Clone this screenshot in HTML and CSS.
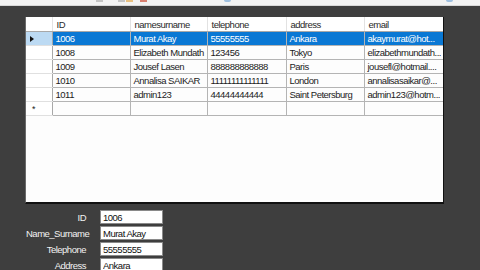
FILE: index.html
```html
<!DOCTYPE html>
<html lang="en">
<head>
    <meta charset="UTF-8">
    <title>Users</title>
    <link rel="stylesheet" href="styles.css">
</head>
<body>
    <div class="toolbar">
        <span class="tb-icon" style="left: 96px"></span>
        <span class="tb-icon" style="left: 118px"></span>
        <span class="tb-icon orange" style="left: 126px"></span>
        <span class="tb-icon red" style="left: 140px"></span>
        <span class="tb-icon blue" style="left: 224px"></span>
        <span class="tb-icon blue" style="left: 446px"></span>
    </div>
    <div class="main">
        <div class="grid">
            <table class="data">
                <colgroup>
                    <col class="c-rh">
                    <col class="c-id">
                    <col class="c-name">
                    <col class="c-tel">
                    <col class="c-addr">
                    <col class="c-mail">
                </colgroup>
                <thead>
                    <tr>
                        <th class="rh"></th>
                        <th>ID</th>
                        <th>namesurname</th>
                        <th>telephone</th>
                        <th>address</th>
                        <th>email</th>
                    </tr>
                </thead>
                <tbody>
                    <tr class="selected">
                        <td class="rh"><span class="arrow"></span></td>
                        <td>1006</td>
                        <td>Murat Akay</td>
                        <td>55555555</td>
                        <td>Ankara</td>
                        <td>akaymurat@hot...</td>
                    </tr>
                    <tr>
                        <td class="rh"></td>
                        <td>1008</td>
                        <td>Elizabeth Mundath</td>
                        <td>123456</td>
                        <td>Tokyo</td>
                        <td>elizabethmundath...</td>
                    </tr>
                    <tr>
                        <td class="rh"></td>
                        <td>1009</td>
                        <td>Jousef Lasen</td>
                        <td>888888888888</td>
                        <td>Paris</td>
                        <td>jousefl@hotmail....</td>
                    </tr>
                    <tr>
                        <td class="rh"></td>
                        <td>1010</td>
                        <td>Annalisa SAIKAR</td>
                        <td>11111111111111</td>
                        <td>London</td>
                        <td>annalisasaikar@...</td>
                    </tr>
                    <tr>
                        <td class="rh"></td>
                        <td>1011</td>
                        <td>admin123</td>
                        <td>44444444444</td>
                        <td>Saint Petersburg</td>
                        <td>admin123@hotm...</td>
                    </tr>
                    <tr class="new-row">
                        <td class="rh"><span class="star">*</span></td>
                        <td></td>
                        <td></td>
                        <td></td>
                        <td></td>
                        <td></td>
                    </tr>
                </tbody>
            </table>
        </div>

        <div class="details">
            <label for="f-id">ID</label>
            <input type="text" id="f-id" value="1006">
            <label for="f-name">Name_Surname</label>
            <input type="text" id="f-name" value="Murat Akay">
            <label for="f-tel">Telephone</label>
            <input type="text" id="f-tel" value="55555555">
            <label for="f-addr">Address</label>
            <input type="text" id="f-addr" value="Ankara">
        </div>
    </div>
</body>
</html>
```

FILE: styles.css
```css
body {
    margin: 0;
    padding: 0;
    background-color: #3e3e3e;
    font-family: 'Liberation Sans', Arial, sans-serif;
    font-size: 9.5px;
    letter-spacing: -0.5px;
    overflow: hidden;
    height: 270px;
}

.toolbar {
    position: relative;
    height: 5px;
    background-color: #f2f2f2;
    border-bottom: 1px solid #d8d8d8;
}

.tb-icon {
    position: absolute;
    top: 0;
    width: 7px;
    height: 2px;
    background-color: #c4c4c4;
}

.tb-icon.orange {
    background-color: #e8c080;
}

.tb-icon.red {
    background-color: #d88070;
}

.tb-icon.blue {
    background-color: #9fc0e0;
    border-radius: 0 0 4px 4px;
}

.main {
    padding: 11px 0 0 26px;
}

.grid {
    width: 417px;
    height: 185px;
    background-color: #fdfdfd;
    border-left: 1px solid #6a6a6a;
    border-right: 1px solid #111;
    border-bottom: 2px solid #111;
    margin-left: -1px;
    overflow: hidden;
}

.data {
    border-collapse: collapse;
    table-layout: fixed;
    width: 417px;
    color: #1c1c1c;
}

.c-rh { width: 26px; }
.c-id { width: 78px; }
.c-name { width: 77px; }
.c-tel { width: 79px; }
.c-addr { width: 78px; }
.c-mail { width: 79px; }

.data th,
.data td {
    height: 13px;
    padding: 0 0 0 3px;
    border: 1px solid #b4b4b4;
    white-space: nowrap;
    overflow: hidden;
    text-align: left;
    font-weight: normal;
    line-height: 13px;
}

.data th {
    height: 14px;
    background-color: #ffffff;
    color: #2a2a2a;
    padding-left: 4px;
    border-top: none;
    border-color: #e2e2e2;
    border-bottom-color: #a8a8a8;
}

.data th:first-child,
.data td:first-child {
    border-left: none;
}

.data th:last-child,
.data td:last-child {
    border-right-color: #a8a8a8;
}

.data td.rh {
    background-color: #ffffff;
    border-color: #e0e0e0;
    border-right-color: #a8a8a8;
    position: relative;
}

.selected td {
    background-color: #0a78d4;
    color: #ffffff;
}

.selected td.rh {
    background-color: #bcdaf3;
}

.arrow {
    position: absolute;
    left: 4px;
    top: 4px;
    width: 0;
    height: 0;
    border-top: 3px solid transparent;
    border-bottom: 3px solid transparent;
    border-left: 4px solid #111;
}

.star {
    position: absolute;
    left: 6px;
    top: 1px;
    font-size: 9px;
    color: #222;
}

.details {
    display: grid;
    grid-template-columns: 60px 63px;
    column-gap: 14px;
    row-gap: 2px;
    margin-top: 6px;
    align-items: center;
}

.details label {
    text-align: right;
    color: #f2f2f2;
}

.details input {
    box-sizing: border-box;
    width: 63px;
    height: 14px;
    margin: 0;
    padding: 0 2px;
    border: 1px solid #8a8a8a;
    background-color: #ffffff;
    font-family: 'Liberation Sans', Arial, sans-serif;
    font-size: 9.5px;
    letter-spacing: -0.5px;
    color: #111;
}
```
